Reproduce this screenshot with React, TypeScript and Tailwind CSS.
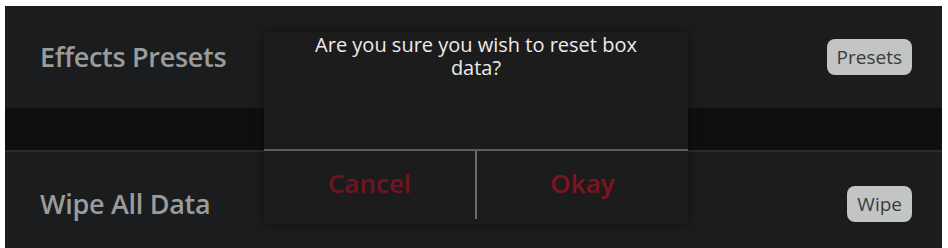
import React from "react";

export default function App() {
  const font = { fontFamily: '"Open Sans", "Noto Sans", sans-serif' };
  return (
    <div className="w-[948px] h-[248px] bg-white pt-[6px] pl-[5px] pr-[6px] overflow-hidden" style={font}>
      <div className="relative h-full bg-[#1b1c1d] flex flex-col">
        <div className="h-[102px] flex items-center justify-between pl-[35px] pr-[30px]">
          <span className="text-[27px] font-semibold text-[#9a9c9c] tracking-[-0.3px]">Effects Presets</span>
          <button className="h-[36px] px-[10px] rounded-[8px] bg-[#c3c5c5] text-[#3a3b3b] text-[19px] leading-none">Presets</button>
        </div>
        <div className="h-[44px] bg-[#0f0f12] border-b-2 border-[#2a2b2c]" />
        <div className="flex-1 flex items-center justify-between pl-[35px] pr-[30px] pt-[8px]">
          <span className="text-[27px] font-semibold text-[#9a9c9c] tracking-[-0.3px]">Wipe All Data</span>
          <button className="h-[36px] px-[10px] rounded-[8px] bg-[#c3c5c5] text-[#3a3b3b] text-[19px] leading-none">Wipe</button>
        </div>

        <div className="absolute left-[259px] top-[26px] w-[424px] h-[192px] bg-[#1c1c1c] flex flex-col shadow-[0_0_12px_rgba(0,0,0,0.35)]">
          <div className="h-[117px] flex justify-center px-[40px] pt-[1px]">
            <p className="text-[20px] leading-[23px] text-[#ececec] text-center">
              Are you sure you wish to reset box data?
            </p>
          </div>
          <div className="h-[2px] bg-[#5a5b5b]" />
          <div className="flex-1 flex">
            <div className="flex-1 flex items-center justify-center pb-[9px]">
              <span className="text-[26px] font-semibold text-[#701520]">Cancel</span>
            </div>
            <div className="w-[2px] h-[68px] bg-[#6a6b6b]" />
            <div className="flex-1 flex items-center justify-center pb-[9px]">
              <span className="text-[26px] font-semibold text-[#84121f]">Okay</span>
            </div>
          </div>
        </div>
      </div>
    </div>
  );
}
